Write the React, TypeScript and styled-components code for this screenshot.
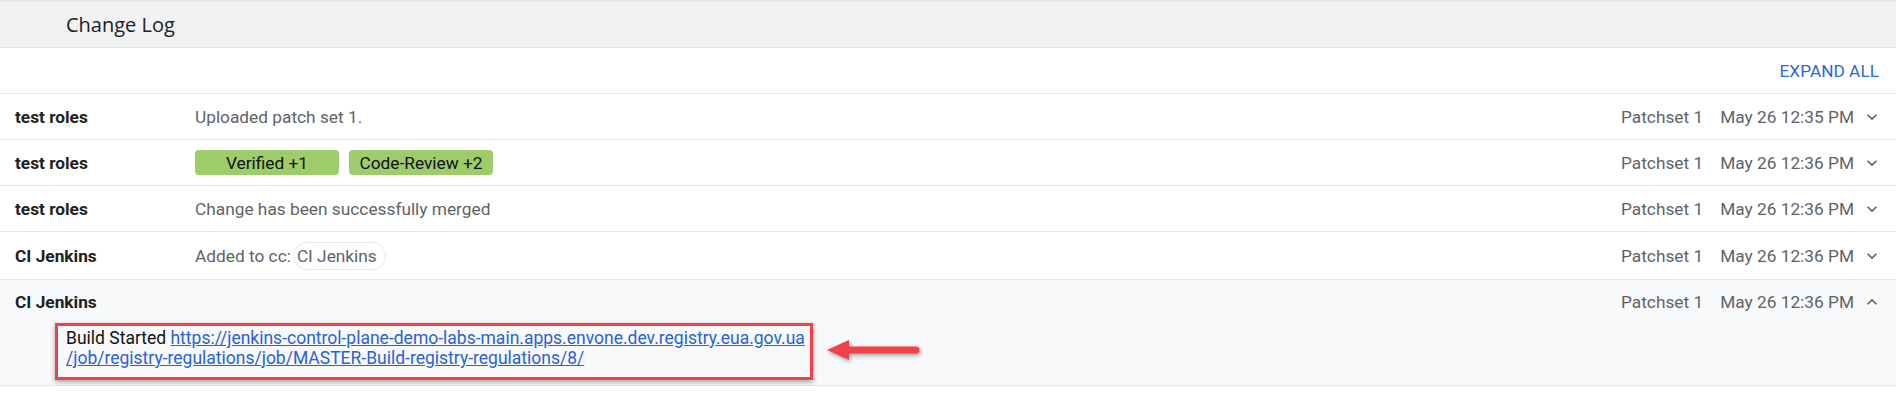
import React from "react";
import styled, { createGlobalStyle } from "styled-components";

const GlobalStyle = createGlobalStyle`
  html, body { margin: 0; padding: 0; background: #ffffff; }
  body { font-family: Roboto, "Liberation Sans", Arial, sans-serif; font-size: 17.3px; color: #212121; }
`;

const Page = styled.div`
  width: 1896px;
  background: #fff;
`;

const Header = styled.div`
  height: 45px;
  display: flex;
  align-items: center;
  padding-left: 66px;
  background: #f1f2f4;
  border-top: 2px solid #e4e5e7;
  border-bottom: 1px solid #e3e3e3;
  font-family: "Open Sans", Roboto, sans-serif;
  font-size: 20px;
  color: #202124;
`;

const Toolbar = styled.div`
  height: 45px;
  display: flex;
  align-items: center;
  justify-content: flex-end;
  padding-right: 17px;
  border-bottom: 1px solid #e6e6e6;
`;

const ExpandAll = styled.button`
  border: none;
  background: none;
  padding: 0;
  font-family: Roboto, sans-serif;
  font-size: 17.3px;
  color: #2b68d8;
  cursor: pointer;
`;

const Row = styled.div<{ $tall?: boolean }>`
  height: ${(p) => (p.$tall ? 47 : 45)}px;
  display: flex;
  align-items: center;
  padding: 0 14px 0 15px;
  border-bottom: 1px solid #e6e6e6;
`;

const ExpandedRow = styled.div`
  background: #f8f9fa;
  border-bottom: 1px solid #e6e6e6;
  padding-bottom: 5px;
`;

const ExpandedHead = styled.div`
  height: 43px;
  display: flex;
  align-items: center;
  padding: 0 14px 0 15px;
`;

const Name = styled.div`
  width: 180px;
  flex: none;
  font-weight: 700;
  color: #212121;
`;

const Message = styled.div`
  flex: 1;
  display: flex;
  align-items: center;
  gap: 10px;
  color: #5f6368;
`;

const Badge = styled.span`
  width: 144px;
  height: 25px;
  display: inline-flex;
  align-items: center;
  justify-content: center;
  background: #9fcc6b;
  border-radius: 4px;
  color: #111;
`;

const CcText = styled.span`
  display: inline-flex;
  align-items: center;
  gap: 2px;
`;

const Chip = styled.span`
  display: inline-flex;
  align-items: center;
  height: 26px;
  padding: 0 8px 0 3px;
  border: 1px solid #e8e8e8;
  border-radius: 14px;
  color: #5f6368;
`;

const Meta = styled.div`
  display: flex;
  align-items: center;
  color: #5f6368;
`;

const Patchset = styled.span`
  margin-right: 17px;
`;

const DateText = styled.span`
  margin-right: 8px;
`;

const Chevron = styled.svg`
  width: 20px;
  height: 20px;
  fill: #5f6368;
  display: block;
`;

const Content = styled.div`
  display: flex;
  align-items: center;
  gap: 12px;
  padding-left: 55px;
`;

const Callout = styled.div`
  border: 3px solid #ef4249;
  padding: 2px 5px 9px 8px;
  line-height: 20px;
  font-size: 17.5px;
  color: #111;
  box-shadow: 0 2px 5px rgba(0, 0, 0, 0.35);
  white-space: nowrap;
`;

const Link = styled.a`
  color: #2a62d3;
  text-decoration: underline;
`;

const Arrow = styled.svg`
  width: 96px;
  height: 26px;
  display: block;
  filter: drop-shadow(1px 2px 2px rgba(0, 0, 0, 0.35));
  margin-top: -4px;
`;

const Down = () => (
  <Chevron viewBox="0 0 24 24">
    <path d="M16.59 8.59L12 13.17 7.41 8.59 6 10l6 6 6-6z" />
  </Chevron>
);

const Up = () => (
  <Chevron viewBox="0 0 24 24">
    <path d="M12 8l-6 6 1.41 1.41L12 10.83l4.59 4.58L18 14z" />
  </Chevron>
);

const RowMeta: React.FC<{ time: string; open?: boolean }> = ({ time, open }) => (
  <Meta>
    <Patchset>Patchset 1</Patchset>
    <DateText>May 26 {time}</DateText>
    {open ? <Up /> : <Down />}
  </Meta>
);

export default function App() {
  return (
    <Page>
      <GlobalStyle />
      <Header>Change Log</Header>
      <Toolbar>
        <ExpandAll>EXPAND ALL</ExpandAll>
      </Toolbar>
      <Row>
        <Name>test roles</Name>
        <Message>Uploaded patch set 1.</Message>
        <RowMeta time="12:35 PM" />
      </Row>
      <Row>
        <Name>test roles</Name>
        <Message>
          <Badge>Verified +1</Badge>
          <Badge>Code-Review +2</Badge>
        </Message>
        <RowMeta time="12:36 PM" />
      </Row>
      <Row>
        <Name>test roles</Name>
        <Message>Change has been successfully merged</Message>
        <RowMeta time="12:36 PM" />
      </Row>
      <Row $tall>
        <Name>CI Jenkins</Name>
        <Message>
          <CcText>
            Added to cc:
            <Chip>CI Jenkins</Chip>
          </CcText>
        </Message>
        <RowMeta time="12:36 PM" />
      </Row>
      <ExpandedRow>
        <ExpandedHead>
          <Name>CI Jenkins</Name>
          <Message />
          <RowMeta time="12:36 PM" open />
        </ExpandedHead>
        <Content>
          <Callout>
            Build Started{" "}
            <Link href="#">
              https://jenkins-control-plane-demo-labs-main.apps.envone.dev.registry.eua.gov.ua
              <br />
              /job/registry-regulations/job/MASTER-Build-registry-regulations/8/
            </Link>
          </Callout>
          <Arrow viewBox="0 0 96 26">
            <polygon points="2,13 24,3 24,23" fill="#ef4249" />
            <line x1="20" y1="13" x2="91" y2="13" stroke="#ef4249" strokeWidth="7" strokeLinecap="round" />
          </Arrow>
        </Content>
      </ExpandedRow>
    </Page>
  );
}
